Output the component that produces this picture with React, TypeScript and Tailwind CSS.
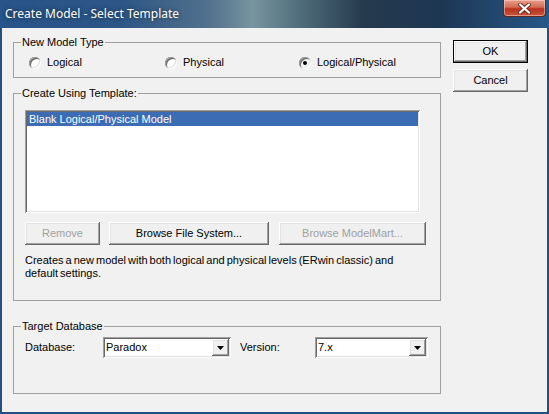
import type { ReactNode } from 'react'

const raised =
  'shadow-[inset_-1px_-1px_#696969,inset_1px_1px_#ffffff,inset_-2px_-2px_#a0a0a0,inset_2px_2px_#e3e3e3]'
const sunken =
  'shadow-[inset_1px_1px_#a0a0a0,inset_-1px_-1px_#ffffff,inset_2px_2px_#696969,inset_-2px_-2px_#e3e3e3]'

function Button({
  children,
  disabled,
  isDefault,
  className = '',
}: {
  children: ReactNode
  disabled?: boolean
  isDefault?: boolean
  className?: string
}) {
  const face = (
    <div
      className={`h-full w-full flex items-center justify-center bg-[#f0f0f0] ${raised} ${
        disabled ? 'text-[#a0a0a0]' : 'text-black'
      }`}
    >
      {children}
    </div>
  )
  if (isDefault) {
    return <div className={`border border-black ${className}`}>{face}</div>
  }
  return <div className={className}>{face}</div>
}

function Radio({ label, checked, className = '' }: { label: string; checked?: boolean; className?: string }) {
  return (
    <div className={`flex items-center ${className}`}>
      <div className={`w-[12px] h-[12px] rounded-full bg-white flex items-center justify-center ${sunken}`}>
        {checked && <div className="w-[4px] h-[4px] rounded-full bg-black" />}
      </div>
      <span className="ml-[6px]">{label}</span>
    </div>
  )
}

function Combo({ value, className = '' }: { value: string; className?: string }) {
  return (
    <div className={`h-[21px] bg-white flex items-stretch p-[2px] ${sunken} ${className}`}>
      <span className="flex-1 pl-[1px] leading-[17px]">{value}</span>
      <div className={`w-[17px] bg-[#f0f0f0] flex items-center justify-center ${raised}`}>
        <svg width="7" height="4" viewBox="0 0 7 4">
          <path d="M0 0h7L3.5 4z" fill="#000" />
        </svg>
      </div>
    </div>
  )
}

function Group({ title, className = '', children }: { title: string; className?: string; children: ReactNode }) {
  return (
    <fieldset className={`border border-[#a0a0a0] ${className}`}>
      <legend className="ml-[7px] px-[1px] leading-[13px]">{title}</legend>
      {children}
    </fieldset>
  )
}

export default function App() {
  return (
    <div className="w-[549px] h-[414px] flex flex-col bg-[#24507f] font-['Liberation_Sans',Arial,sans-serif] text-[11px] text-black">
      {/* title bar */}
      <div className="h-[28px] relative flex items-center pl-[5px] bg-[linear-gradient(90deg,#27548a_0%,#2d5686_22%,#51718c_38%,#7894a0_46%,#52707e_54%,#263a4e_66%,#1d3652_80%,#275888_100%)]">
        <span className="font-['Noto_Sans',sans-serif] text-[12px] text-white [text-shadow:0_0_4px_rgba(0,0,0,0.6)]">
          Create Model - Select Template
        </span>
        <div className="absolute right-[3px] top-0 w-[43px] h-[17px] rounded-b-[4px] border border-t-0 border-[#5a2a22] shadow-[inset_0_0_0_1px_rgba(255,220,210,0.5)] bg-[linear-gradient(180deg,#e8a08c_0%,#d46a52_45%,#b8321e_55%,#c8543a_100%)] flex items-center justify-center">
          <svg width="13" height="11" viewBox="0 0 13 11">
            <path d="M2 1.5l9 8M11 1.5l-9 8" stroke="#6a2a20" strokeWidth="4" strokeLinecap="round" />
            <path d="M2 1.5l9 8M11 1.5l-9 8" stroke="#ffffff" strokeWidth="2.2" strokeLinecap="round" />
          </svg>
        </div>
      </div>

      {/* client area */}
      <div className="flex-1 mx-[2px] mb-[2px] bg-[#f1f1f1] flex pt-[8px] pl-[11px]">
        <div className="w-[428px] flex flex-col">
          <Group title="New Model Type" className="h-[42px]">
            <div className="flex mt-[7px] pl-[15px] leading-[13px]">
              <Radio label="Logical" className="w-[136px]" />
              <Radio label="Physical" className="w-[134px]" />
              <Radio label="Logical/Physical" checked />
            </div>
          </Group>

          <Group title="Create Using Template:" className="h-[214px] mt-[9px]">
            <div className="pl-[11px]">
              <div className={`mt-[10px] w-[395px] h-[103px] bg-white p-[2px] ${sunken}`}>
                <div className="h-[14px] bg-[#3b6cb4] text-white leading-[14px] pl-[2px]">Blank Logical/Physical Model</div>
              </div>
              <div className="flex mt-[9px] h-[23px]">
                <Button disabled className="w-[75px]">Remove</Button>
                <Button className="w-[160px] ml-[9px]">Browse File System...</Button>
                <Button disabled className="w-[147px] ml-[10px]">Browse ModelMart...</Button>
              </div>
              <p className="mt-[9px] leading-[13px] [word-spacing:-1px]">
                Creates a new model with both logical and physical levels (ERwin classic) and
                <br />
                default settings.
              </p>
            </div>
          </Group>

          <Group title="Target Database" className="h-[74px] mt-[19px]">
            <div className="flex items-center mt-[4px] pl-[11px]">
              <span className="w-[78px]">Database:</span>
              <Combo value="Paradox" className="w-[128px]" />
              <span className="w-[75px] ml-[9px]">Version:</span>
              <Combo value="7.x" className="w-[113px]" />
            </div>
          </Group>
        </div>

        <div className="ml-[12px] pt-[4px] flex flex-col">
          <Button isDefault className="w-[75px] h-[23px]">OK</Button>
          <Button className="w-[75px] h-[23px] mt-[6px]">Cancel</Button>
        </div>
      </div>
    </div>
  )
}
